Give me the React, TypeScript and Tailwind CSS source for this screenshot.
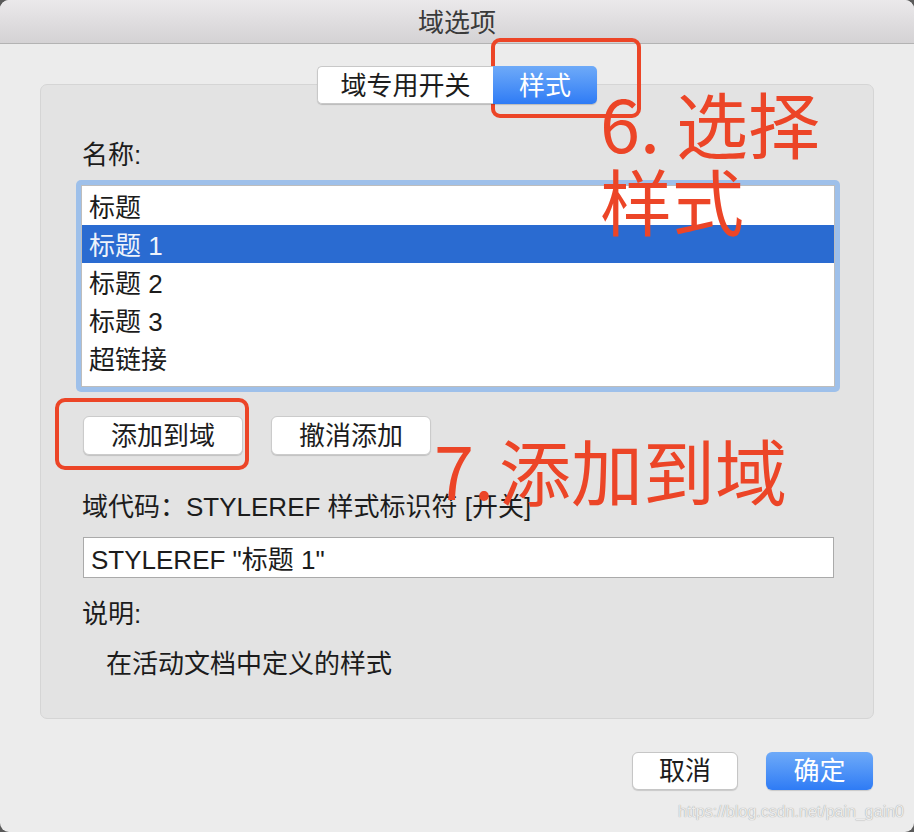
import React from 'react'

const rows = ['标题', '标题 1', '标题 2', '标题 3', '超链接']

export default function App() {
  return (
    <div className="w-[914px] h-[832px] bg-[#5a5a5a] font-['Liberation_Sans','Noto_Sans_CJK_SC',sans-serif] text-[26px] text-[#1c1c1c]">
      <div className="relative w-full h-full rounded-[9px] overflow-hidden bg-[#ececec] flex flex-col">
        {/* title bar */}
        <div className="h-[44px] shrink-0 pt-[3px] border-b border-[#b3b3b3] bg-gradient-to-b from-[#ebe9eb] to-[#d4d2d4] flex items-center justify-center text-[#3a3a3a] leading-none">
          域选项
        </div>

        <div className="flex flex-col pt-[22px]">
          {/* segmented control */}
          <div className="self-center relative z-10 -mb-[20px] flex h-[38px] leading-none shadow-[0_1px_1px_rgba(0,0,0,0.18)] rounded-[5px]">
            <div className="w-[176px] flex items-center justify-center pt-[2px] bg-white border border-[#c8c8c8] border-r-0 rounded-l-[5px]">
              域专用开关
            </div>
            <div className="w-[104px] flex items-center justify-center pt-[2px] text-white bg-gradient-to-b from-[#6eaaf8] to-[#2e7bf5] rounded-r-[5px]">
              样式
            </div>
          </div>

          {/* group box */}
          <div className="mx-[40px] h-[635px] rounded-[7px] border border-[#d5d5d5] bg-[#e3e3e3] pl-[41px] pt-[54px] flex flex-col">
            <div className="leading-[32px]">名称:</div>

            <div className="mt-[9px] -ml-[6px] w-[764px] h-[212px] rounded-[5px] bg-[#9ec0ea] p-[5px]">
              <div className="h-full border border-[#bdbdbd] bg-white pt-[1px]">
                {rows.map((r, i) => (
                  <div
                    key={r}
                    className={`h-[38px] pl-[7px] pt-[4px] flex items-center leading-none ${i === 1 ? 'bg-[#2a6bd1] text-[#eef3fb]' : ''}`}
                  >
                    {r}
                  </div>
                ))}
              </div>
            </div>

            <div className="mt-[24px] ml-[1px] flex gap-[28px] leading-none">
              <button className="w-[160px] h-[39px] flex items-center justify-center bg-white border border-[#cbcbcb] rounded-[6px] shadow-[0_1px_1px_rgba(0,0,0,0.15)]">
                添加到域
              </button>
              <button className="w-[160px] h-[39px] flex items-center justify-center bg-white border border-[#cbcbcb] rounded-[6px] shadow-[0_1px_1px_rgba(0,0,0,0.15)]">
                撤消添加
              </button>
            </div>

            <div className="mt-[36px] leading-[32px]">域代码：STYLEREF 样式标识符 [开关]</div>

            <div className="mt-[14px] ml-[1px] w-[751px] h-[41px] border border-[#aaaaaa] bg-white pl-[7px] flex items-center leading-none pt-[4px]">
              STYLEREF "标题 1"
            </div>

            <div className="mt-[20px] leading-[32px]">说明:</div>
            <div className="mt-[18px] ml-[24px] leading-[32px]">在活动文档中定义的样式</div>
          </div>

          {/* footer buttons */}
          <div className="mt-[33px] pr-[41px] flex justify-end gap-[28px] leading-none">
            <button className="w-[106px] h-[38px] flex items-center justify-center bg-white border border-[#c6c6c6] rounded-[6px] shadow-[0_1px_1px_rgba(0,0,0,0.15)]">
              取消
            </button>
            <button className="w-[107px] h-[38px] flex items-center justify-center text-white bg-gradient-to-b from-[#6eaaf8] to-[#2e7bf5] rounded-[6px] shadow-[0_1px_1px_rgba(0,0,0,0.15)]">
              确定
            </button>
          </div>
        </div>

        {/* watermark */}
        <div className="absolute right-[10px] top-[801px] text-[16px] leading-[22px] text-[#ececec] [text-shadow:0_0_1px_#8a8a8a]">
          https://blog.csdn.net/pain_gain0
        </div>

        {/* annotations */}
        <div className="absolute left-[491px] top-[38px] w-[150px] h-[80px] rounded-[9px] border-[4px] border-[#ec4527]" />
        <div className="absolute left-[55px] top-[398px] w-[194px] h-[72px] rounded-[10px] border-[4px] border-[#ec4527]" />
        <div className="absolute left-[600px] top-[83px] font-['Noto_Sans_CJK_SC',sans-serif] text-[72px] leading-[77px] text-[#ec4527]">
          <div>6. 选择</div>
          <div>样式</div>
        </div>
        <div className="absolute left-[434px] top-[430px] font-['Noto_Sans_CJK_SC',sans-serif] text-[72px] leading-[77px] text-[#ec4527]">
          7.<span className="ml-[5px]">添加到域</span>
        </div>
      </div>
    </div>
  )
}
